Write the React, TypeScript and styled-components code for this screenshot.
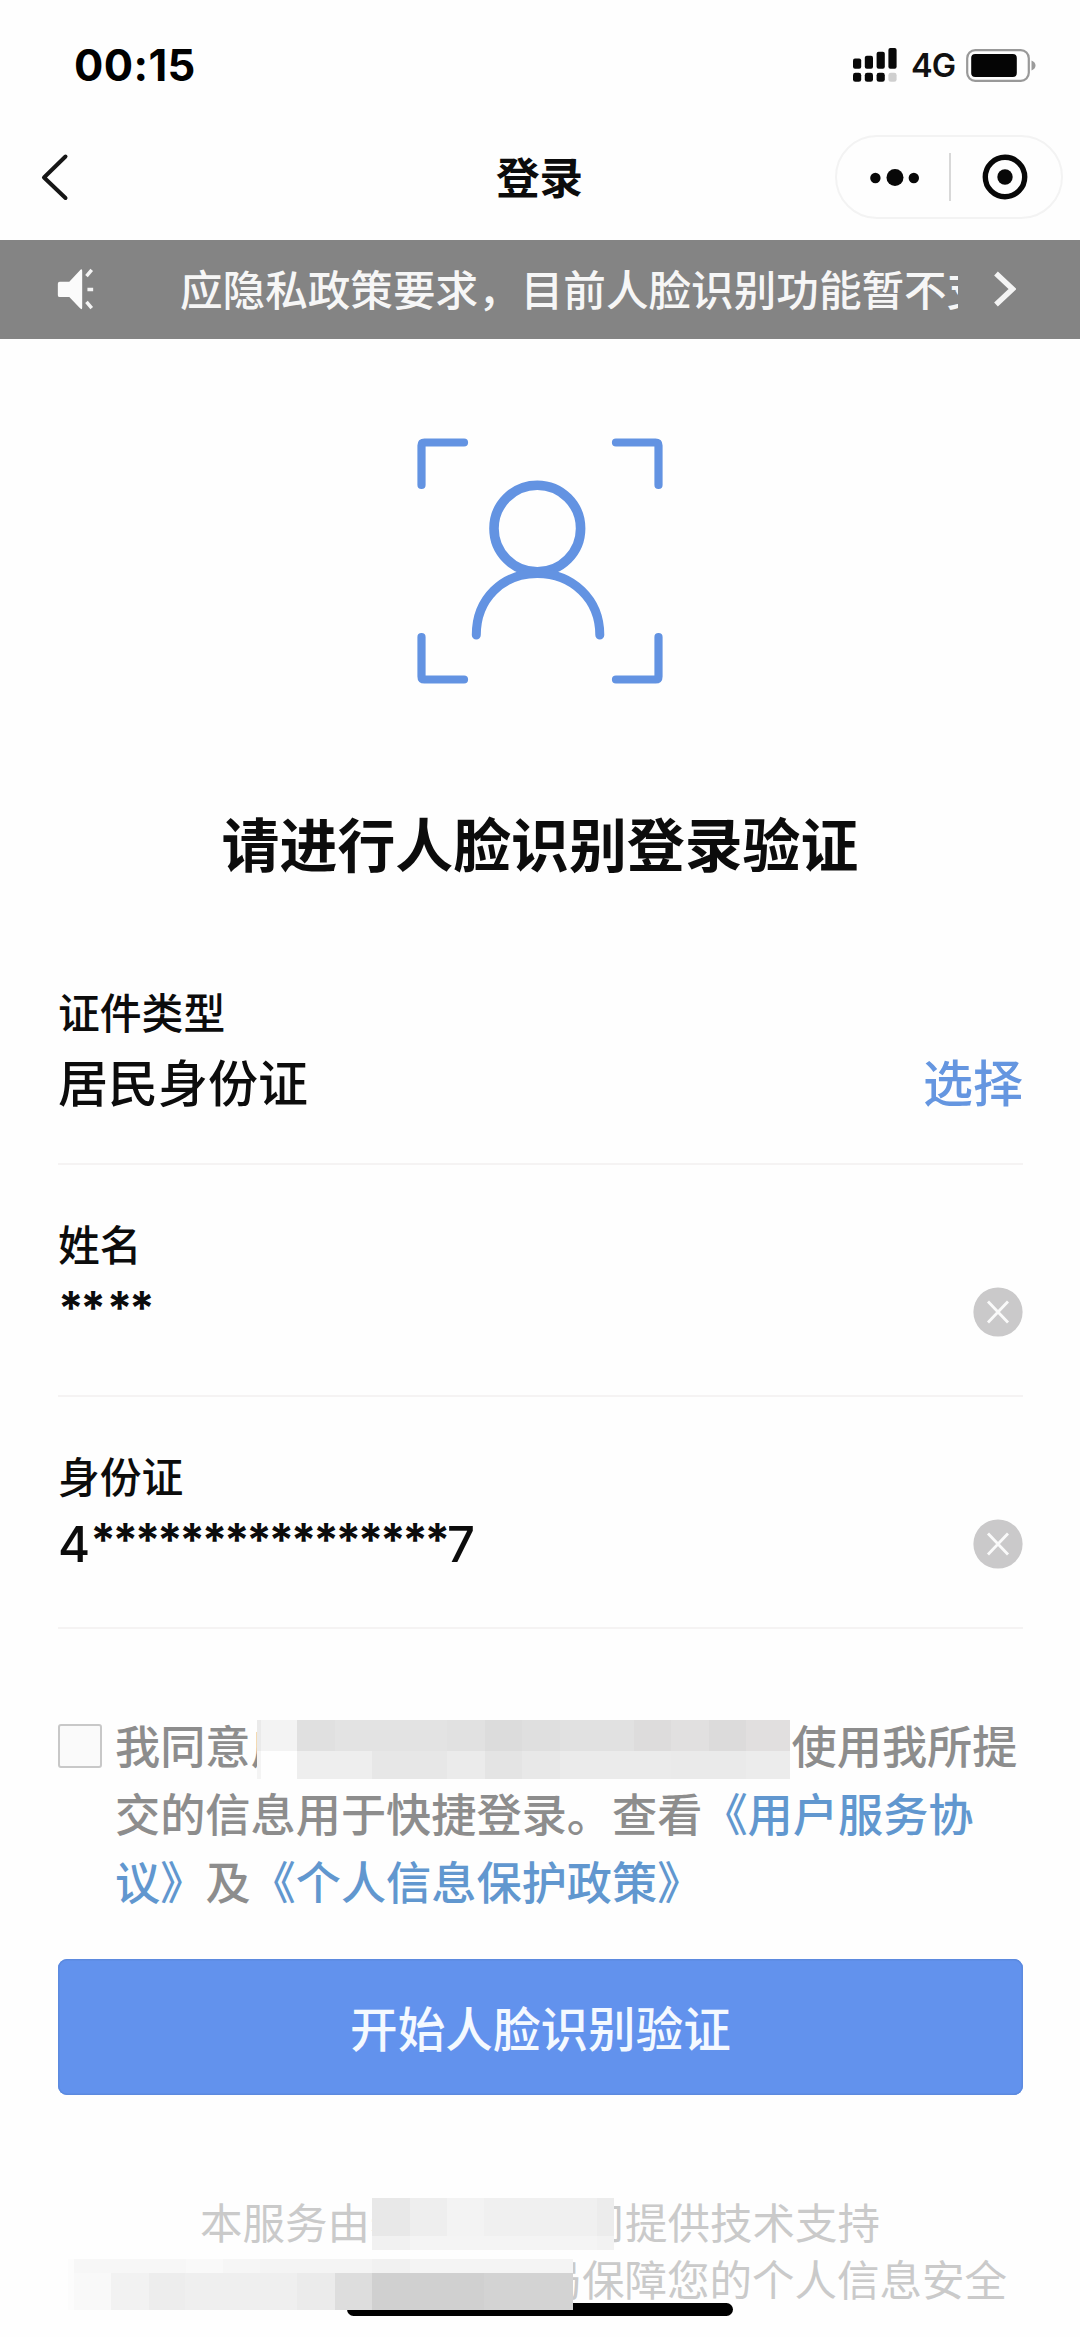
import React from 'react';
import styled, { createGlobalStyle } from 'styled-components';

const CJK = '"Noto Sans CJK SC", "Noto Sans", sans-serif';
const LATIN = 'Inter, "Noto Sans CJK SC", sans-serif';

const GlobalStyle = createGlobalStyle`
  html, body { margin: 0; padding: 0; background: #fefefe; }
  *, *::before, *::after { box-sizing: border-box; }
  svg { display: block; flex: none; }
  button { border: 0; margin: 0; padding: 0; background: none; font: inherit; }
`;

const Screen = styled.div`
  position: relative;
  display: flex;
  flex-direction: column;
  width: 1080px;
  height: 2337px;
  overflow: hidden;
  background: #fefefe;
  font-family: ${CJK};
  color: #0c0c0c;
  white-space: nowrap;
`;

const StatusBar = styled.header`
  display: flex;
  align-items: center;
  justify-content: space-between;
  height: 130px;
  padding: 0 43px 0 74px;
`;

const Clock = styled.time`
  font: 700 43.5px/60px ${LATIN};
  letter-spacing: 0.4px;
  color: #000;
`;

const StatusIcons = styled.div`
  display: flex;
  align-items: center;
`;

const Network = styled.span`
  width: 43px;
  margin: 1px 12px 0 13px;
  font: 600 32.5px/40px ${LATIN};
  letter-spacing: -1px;
  color: #111;
`;

const NavBar = styled.nav`
  display: grid;
  grid-template-columns: 1fr auto 1fr;
  align-items: center;
  height: 94px;
  margin-bottom: 15.5px;
  padding: 0 17px 0 40px;
`;

const BackButton = styled.button`
  justify-self: start;
`;

const NavTitle = styled.h1`
  margin: 0;
  padding: 0 24px 3px 0;
  font-size: 43.5px;
  font-weight: 700;
  line-height: 60px;
`;

const Capsule = styled.div`
  justify-self: end;
  display: grid;
  grid-template-columns: 112px auto 1fr;
  align-items: center;
  justify-items: center;
  width: 228px;
  height: 84px;
  padding-right: 2px;
  border: 2px solid #f3f3f3;
  border-radius: 42px;
`;

const CapsuleButton = styled.button<{ $nudge?: number }>`
  padding-left: ${p => p.$nudge ?? 0}px;
`;

const CapsuleDivider = styled.i`
  width: 1.5px;
  height: 48px;
  background: #d8d8d8;
`;

const Notice = styled.div`
  display: flex;
  align-items: center;
  height: 99px;
  padding: 0 64px 0 55px;
  background: #848484;
  color: #f6f6f6;
`;

const NoticeText = styled.p`
  width: 779px;
  margin: -3px 34px 0 84px;
  overflow: hidden;
  font-size: 42.6px;
  font-weight: 500;
  line-height: 64px;
`;

const Hero = styled.section`
  display: flex;
  flex-direction: column;
  align-items: center;
  height: 594.5px;
  padding-top: 99.5px;
`;

const HeroTitle = styled.h2`
  margin: 118px 0 0;
  font-size: 57.9px;
  font-weight: 700;
  line-height: 80px;
`;

const Form = styled.main`
  padding: 0 57px 0 58px;
`;

const Field = styled.div`
  display: flex;
  flex-direction: column;
  gap: 14px;
  height: 232px;
  padding-top: 53px;
  border-bottom: 2px solid #f5f3f3;
`;

const Label = styled.label`
  font-size: 41.8px;
  font-weight: 500;
  line-height: 50px;
`;

const ValueRow = styled.div`
  display: flex;
  align-items: center;
  justify-content: space-between;
  height: 60px;
`;

const Value = styled.span`
  font-size: 50px;
  font-weight: 500;
  line-height: 60px;
`;

const Masked = styled.span`
  display: flex;
  height: 60px;
  font: 500 49px/61px ${LATIN};
`;

const Star = styled.span<{ $wide?: boolean }>`
  width: ${p => (p.$wide ? 26.5 : 22.3)}px;
  font-size: 46px;
  font-weight: 700;
  line-height: 53px;
`;

const SelectLink = styled.button`
  font-size: 50px;
  font-weight: 500;
  line-height: 60px;
  color: #6596e0;
`;

const Agreement = styled.section`
  display: flex;
  height: 330px;
  padding: 82px 0 0 0;
`;

const Checkbox = styled.span`
  width: 44px;
  height: 44px;
  margin: 13px 13px 0 0;
  border: 2px solid #c8c8c8;
  border-radius: 3px;
  background: #fafafa;
`;

const AgreementLines = styled.div`
  font-size: 45.2px;
  font-weight: 500;
  line-height: 68px;
  color: #8d8d8d;
`;

const Line = styled.div`
  display: flex;
  height: 68px;
`;

const Link = styled.a`
  color: #6197cf;
`;

const Clipped = styled.span<{ $w: number; $fromEnd?: boolean }>`
  display: flex;
  justify-content: ${p => (p.$fromEnd ? 'flex-end' : 'flex-start')};
  width: ${p => p.$w}px;
  overflow: hidden;
`;

const Submit = styled.button`
  display: block;
  width: 100%;
  height: 135.5px;
  border-radius: 9px;
  background: #6292ed;
  box-shadow: inset 0 0 0 1.5px #5c8adf;
  color: #f4f9ff;
  font-size: 47.6px;
  font-weight: 500;
  line-height: 131px;
`;

const Footer = styled.footer`
  padding-top: 97px;
  font-size: 42.5px;
  line-height: 57.7px;
  color: #cacaca;
`;

const FooterLine = styled.div<{ $start: number }>`
  display: flex;
  height: 57.7px;
  padding-left: ${p => p.$start}px;
`;

const MosaicBox = styled.span<{ $top: number; $after?: number }>`
  position: relative;
  z-index: 2;
  display: flex;
  flex: none;
  flex-direction: column;
  align-self: flex-start;
  margin: ${p => p.$top}px ${p => p.$after ?? 0}px 0 0;
`;

const MosaicRow = styled.span<{ $h: number }>`
  display: flex;
  height: ${p => p.$h}px;
`;

const MosaicCell = styled.i<{ $w: number; $tone: string }>`
  width: ${p => p.$w}px;
  background: ${p => p.$tone};
`;

const HomeIndicator = styled.div`
  position: absolute;
  z-index: 1;
  left: 347px;
  bottom: 21px;
  width: 386px;
  height: 13px;
  border-radius: 7px;
  background: #000;
`;

type Row = { h: number; cells: [number, string][] };

const Mosaic = ({ rows, top, after }: { rows: Row[]; top: number; after?: number }) => (
  <MosaicBox $top={top} $after={after}>
    {rows.map((r, i) => (
      <MosaicRow key={i} $h={r.h}>
        {r.cells.map(([w, tone], j) => (
          <MosaicCell key={j} $w={w} $tone={tone} />
        ))}
      </MosaicRow>
    ))}
  </MosaicBox>
);

const agreementMosaic: Row[] = [
  {
    h: 31,
    cells: [[4, '#eaeaea'], [36, '#f3f3f3'], [38, '#e0e0e0'], [112, '#e3e3e3'], [38, '#e1e1e1'], [37, '#dcdcdc'],
      [38, '#dfdfdf'], [74, '#e1e1e1'], [37, '#dddcdc'], [38, '#e1e0e0'], [37, '#dcdbdb'], [44, '#e1dfdf']],
  },
  {
    h: 28,
    cells: [[4, '#f4f4f4'], [36, '#fefefe'], [75, '#eeeeee'], [75, '#e7e7e7'], [38, '#ebebeb'], [37, '#e4e4e4'],
      [38, '#e8e8e8'], [111, '#ebebeb'], [75, '#eaeaea'], [44, '#ececec']],
  },
];

const footerMosaicA: Row[] = [
  { h: 38, cells: [[38, '#e8e8e8'], [37, '#eeeeee'], [37, '#f3f3f3'], [113, '#f0f0f0'], [17, '#ececec']] },
  { h: 14, cells: [[38, '#f1f1f1'], [187, '#f4f4f4'], [17, '#f2f2f2']] },
];

const footerMosaicB: Row[] = [
  {
    h: 14,
    cells: [[6, '#fcfcfc'], [112, '#f7f7f7'], [37, '#f9f9f9'], [37, '#f6f6f6'], [112, '#f4f4f4'],
      [38, '#f1f1f1'], [163, '#f4f4f4']],
  },
  {
    h: 37,
    cells: [[6, '#fcfcfc'], [37, '#f9f9f9'], [38, '#f2f2f2'], [36, '#ededed'], [112, '#efefef'], [38, '#ebebeb'],
      [37, '#dddddd'], [112, '#d0d0d0'], [89, '#d3d3d3']],
  },
];

const Signal = () => (
  <svg width="45" height="34" viewBox="0 0 45 34" fill="#080808">
    <rect x="0" y="10.400" width="8.2" height="10.4" rx="2" />
    <rect x="11.8" y="7.800" width="8.2" height="13" rx="2" />
    <rect x="23.6" y="3.800" width="8.2" height="17" rx="2" />
    <rect x="35.4" y="0" width="8.2" height="20.8" rx="2" />
    <rect x="0" y="24.800" width="8.2" height="9" rx="2.4" />
    <rect x="11.8" y="24.800" width="8.2" height="9" rx="2.4" />
    <rect x="23.6" y="24.800" width="8.2" height="9" rx="2.4" />
    <rect x="35.4" y="24.800" width="8.2" height="9" rx="2.4" fill="#cfcfcf" />
  </svg>
);

const Battery = () => (
  <svg width="71" height="33" viewBox="0 0 71 33">
    <rect x="1.2" y="1.2" width="61.600" height="30.6" rx="8" fill="none" stroke="#999" strokeWidth="2.2" />
    <rect x="5.2" y="5" width="45.6" height="23" rx="4" fill="#050505" />
    <path d="M65.500 11.500c2.600 1 4 2.800 4 5s-1.400 4-4 5z" fill="#9b9b9b" />
  </svg>
);

const BackIcon = () => (
  <svg width="30" height="48" viewBox="0 0 30 48" fill="none" stroke="#161616" strokeWidth="4" strokeLinecap="round" strokeLinejoin="round">
    <path d="M25.500 3.500L4 24.500l21.500 20.500" />
  </svg>
);

const MoreIcon = () => (
  <svg width="52" height="20" viewBox="0 0 52 20" fill="#080808">
    <circle cx="6.400" cy="11" r="5.200" />
    <circle cx="26" cy="10.500" r="8.500" />
    <circle cx="44.800" cy="11" r="5.200" />
  </svg>
);

const TargetIcon = () => (
  <svg width="46" height="46" viewBox="0 0 46 46">
    <circle cx="23" cy="23" r="19.700" fill="none" stroke="#080808" strokeWidth="5.400" />
    <circle cx="23" cy="23" r="7.700" fill="#080808" />
  </svg>
);

const SpeakerIcon = () => (
  <svg width="41" height="42" viewBox="0 0 41 44">
    <path d="M4 14.500h10L25 2.500Q27.500 0 27.500 3v38.500q0 3-2.500.500L14 30.500H4q-2 0-2-2v-12q0-2 2-2z" fill="#fbfbfb" />
    <path d="M32 8.500L37.500 2M33 22.500h6M32 35.500l5.500 6.500" stroke="#f4f4f4" strokeWidth="3.600" fill="none" />
  </svg>
);

const NoticeArrow = () => (
  <svg width="24" height="36" viewBox="0 0 24 36" fill="none" stroke="#f4f4f4" strokeWidth="5.400">
    <path d="M4 2.500L20.500 18 4 33.500" />
  </svg>
);

const FaceScanIcon = () => (
  <svg width="246" height="246" viewBox="0 0 246 246" fill="none" stroke="#6393e2" strokeLinecap="round" strokeLinejoin="round">
    <g strokeWidth="8.200">
      <path d="M4.500 47V7.500q0-3 3-3H47" />
      <path d="M199 4.500h39.500q3 0 3 3V47" />
      <path d="M4.500 199v39.500q0 3 3 3H47" />
      <path d="M199 241.500h39.500q3 0 3-3V199" />
    </g>
    <circle cx="120.300" cy="90.500" r="43.300" strokeWidth="9.600" />
    <path d="M59.300 197c0-36 26-61.500 61-61.500s62.500 25.500 62.500 61.500" strokeWidth="9" />
  </svg>
);

const ClearIcon = () => (
  <svg width="50" height="50" viewBox="0 0 50 50">
    <circle cx="25" cy="25" r="24.600" fill="#cac9ca" />
    <path d="M15 14.500l20 21M35 14.500l-20 21" stroke="#fafafa" strokeWidth="2.800" />
  </svg>
);

const App = () => (
  <>
    <GlobalStyle />
    <Screen>
      <StatusBar>
        <Clock>00:15</Clock>
        <StatusIcons>
          <Signal />
          <Network>4G</Network>
          <Battery />
        </StatusIcons>
      </StatusBar>
      <NavBar>
        <BackButton aria-label="返回"><BackIcon /></BackButton>
        <NavTitle>登录</NavTitle>
        <Capsule>
          <CapsuleButton $nudge={3}><MoreIcon /></CapsuleButton>
          <CapsuleDivider />
          <CapsuleButton><TargetIcon /></CapsuleButton>
        </Capsule>
      </NavBar>
      <Notice>
        <SpeakerIcon />
        <NoticeText>应隐私政策要求，目前人脸识别功能暂不支</NoticeText>
        <NoticeArrow />
      </Notice>
      <Hero>
        <FaceScanIcon />
        <HeroTitle>请进行人脸识别登录验证</HeroTitle>
      </Hero>
      <Form>
        <Field>
          <Label>证件类型</Label>
          <ValueRow>
            <Value>居民身份证</Value>
            <SelectLink>选择</SelectLink>
          </ValueRow>
        </Field>
        <Field>
          <Label>姓名</Label>
          <ValueRow>
            <Masked>
              {[0, 1, 2, 3].map(i => <Star key={i} $wide={i === 1}>*</Star>)}
            </Masked>
            <ClearIcon />
          </ValueRow>
        </Field>
        <Field>
          <Label>身份证</Label>
          <ValueRow>
            <Masked>
              4
              {Array.from({ length: 16 }, (_, i) => <Star key={i}>*</Star>)}
              7
            </Masked>
            <ClearIcon />
          </ValueRow>
        </Field>
        <Agreement>
          <Checkbox />
          <AgreementLines>
            <Line>
              我同意
              <Clipped $w={6}>广</Clipped>
              <Mosaic rows={agreementMosaic} top={9} after={2} />
              使用我所提
            </Line>
            <Line>交的信息用于快捷登录。查看<Link>《用户服务协</Link></Line>
            <Line><Link>议》</Link>及<Link>《个人信息保护政策》</Link></Line>
          </AgreementLines>
        </Agreement>
        <Submit>开始人脸识别验证</Submit>
      </Form>
      <Footer>
        <FooterLine $start={200}>
          本服务由
          <Clipped $w={2}>泰</Clipped>
          <Mosaic rows={footerMosaicA} top={6} />
          <Clipped $w={11} $fromEnd>司</Clipped>
          提供技术支持
        </FooterLine>
        <FooterLine $start={68}>
          <Mosaic rows={footerMosaicB} top={10} />
          <Clipped $w={9} $fromEnd>局</Clipped>
          保障您的个人信息安全
        </FooterLine>
      </Footer>
      <HomeIndicator />
    </Screen>
  </>
);

export default App;
